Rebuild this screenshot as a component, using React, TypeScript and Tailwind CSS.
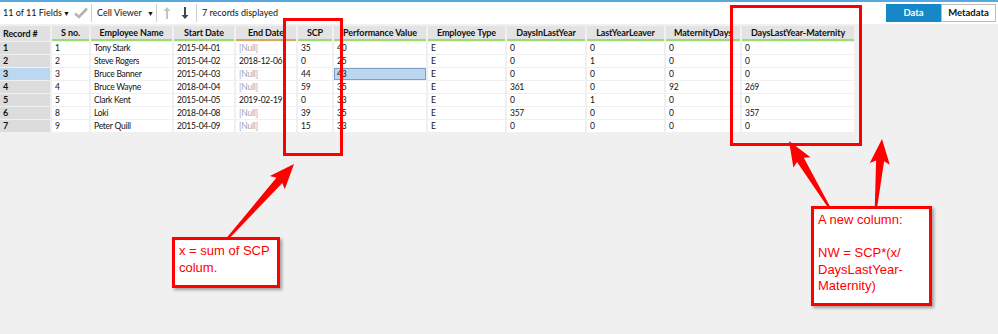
import { ReactNode } from "react";

type Col = { title: string; w: string; line: string };

const cols: Col[] = [
  { title: "S no.", w: "w-[37px]", line: "border-[#9bdc72]" },
  { title: "Employee Name", w: "w-[81px]", line: "border-[#9bdc72]" },
  { title: "Start Date", w: "w-[60px]", line: "border-[#9bdc72]" },
  { title: "End Date", w: "w-[60px]", line: "border-[#d4a867]" },
  { title: "SCP", w: "w-[34px]", line: "border-[#9bdc72]" },
  { title: "Performance Value", w: "w-[92px]", line: "border-[#9bdc72]" },
  { title: "Employee Type", w: "w-[77px]", line: "border-[#9bdc72]" },
  { title: "DaysInLastYear", w: "w-[78px]", line: "border-[#9bdc72]" },
  { title: "LastYearLeaver", w: "w-[77px]", line: "border-[#9bdc72]" },
  { title: "MaternityDays", w: "w-[74px]", line: "border-[#9bdc72]" },
  { title: "DaysLastYear-Maternity", w: "w-[112px]", line: "border-[#9bdc72]" },
];

const rows: string[][] = [
  ["1", "Tony Stark", "2015-04-01", "", "35", "40", "E", "0", "0", "0", "0"],
  ["2", "Steve Rogers", "2015-04-02", "2018-12-06", "0", "25", "E", "0", "1", "0", "0"],
  ["3", "Bruce Banner", "2015-04-03", "", "44", "43", "E", "0", "0", "0", "0"],
  ["4", "Bruce Wayne", "2018-04-04", "", "59", "35", "E", "361", "0", "92", "269"],
  ["5", "Clark Kent", "2015-04-05", "2019-02-19", "0", "33", "E", "0", "1", "0", "0"],
  ["8", "Loki", "2018-04-08", "", "39", "35", "E", "357", "0", "0", "357"],
  ["9", "Peter Quill", "2015-04-09", "", "15", "33", "E", "0", "0", "0", "0"],
];

const Sep = ({ className }: { className: string }) => (
  <div className={"w-px h-[18px] bg-[#d0d0d0] " + className} />
);

// fat callout arrow, narrow tail widening into the head
function arrow(x1: number, y1: number, x2: number, y2: number) {
  const dx = x2 - x1;
  const dy = y2 - y1;
  const len = Math.hypot(dx, dy);
  const ux = dx / len;
  const uy = dy / len;
  const nx = -uy;
  const ny = ux;
  const hl = 22;
  const hw = 10;
  const bx = x2 - ux * hl;
  const by = y2 - uy * hl;
  const p = (x: number, y: number) => `${x.toFixed(1)},${y.toFixed(1)}`;
  return [
    p(x1 + nx * 1.2, y1 + ny * 1.2),
    p(bx + nx * 4, by + ny * 4),
    p(bx - ux * 3 + nx * hw, by - uy * 3 + ny * hw),
    p(x2, y2),
    p(bx - ux * 3 - nx * hw, by - uy * 3 - ny * hw),
    p(bx - nx * 4, by - ny * 4),
    p(x1 - nx * 1.2, y1 - ny * 1.2),
  ].join(" ");
}

const Note = ({ className, children }: { className: string; children: ReactNode }) => (
  <div
    className={
      "absolute bg-white border-[3px] border-[#ff0000] shadow-[2px_2px_3px_rgba(0,0,0,0.35)] text-[#ff0000] text-[13px] leading-[16.5px] pl-[4px] pt-[3px] whitespace-nowrap " +
      className
    }
    style={{ fontFamily: '"Liberation Sans", Arial, sans-serif' }}
  >
    {children}
  </div>
);

export default function App() {
  return (
    <div
      className="relative w-[998px] h-[334px] bg-[#f0f0f0] overflow-hidden text-[#111]"
      style={{ fontFamily: 'Lato, "Open Sans", sans-serif' }}
    >
      {/* toolbar */}
      <div className="h-[24px] bg-white border-t-[2px] border-[#5aa6de] flex items-center text-[9px] pr-[2px] whitespace-nowrap">
        <span className="pl-[3px] w-[63px]">11 of 11 Fields</span>
        <span className="text-[7px] w-[11px]">▼</span>
        <svg width="14" height="12" viewBox="0 0 14 12">
          <path d="M1 6.5 L5 10 L13 1.5" fill="none" stroke="#b4b4b4" strokeWidth="2.6" />
        </svg>
        <Sep className="ml-[3px] mr-[5px]" />
        <span className="w-[50px]">Cell Viewer</span>
        <span className="text-[7px] w-[9px]">▼</span>
        <Sep className="mr-[5px]" />
        <svg width="10" height="14" viewBox="0 0 10 14">
          <path d="M5 1 L1.5 5 H4 V13 H6 V5 H8.5 Z" fill="#c4c4c4" />
        </svg>
        <svg width="10" height="14" viewBox="0 0 10 14" className="ml-[8px]">
          <path d="M5 13 L1.5 9 H4 V1 H6 V9 H8.5 Z" fill="#3c4a4a" />
        </svg>
        <Sep className="ml-[6px] mr-[5px]" />
        <span>7 records displayed</span>
        <div className="ml-auto flex h-[18px] text-[9.5px] font-bold">
          <div className="w-[55px] bg-[#1687c7] text-white flex items-center justify-center">Data</div>
          <div className="w-[55px] bg-white border border-[#bdbdbd] flex items-center justify-center">Metadata</div>
        </div>
      </div>

      {/* grid */}
      <div className="mt-[2px] flex flex-col gap-[1px] text-[8.5px] leading-[12px] w-[855px]">
        <div className="flex gap-[2px] h-[15px] text-[9px] tracking-[-0.1px]">
          <div className="w-[50px] bg-[#e1e1e1] font-bold pl-[3px] flex items-center">Record #</div>
          {cols.map((c) => (
            <div
              key={c.title}
              className={`${c.w} bg-[#e3e3e3] border-b-2 ${c.line} font-bold flex items-center justify-center whitespace-nowrap overflow-hidden`}
            >
              {c.title}
            </div>
          ))}
        </div>
        {rows.map((r, i) => (
          <div key={i} className="flex gap-[2px] h-[12px] tracking-[-0.25px]">
            <div
              className={`w-[50px] font-bold pl-[3px] text-[9px] ${i === 2 ? "bg-[#bcd7f0]" : "bg-[#dcdcdc]"}`}
            >
              {i + 1}
            </div>
            {cols.map((c, j) => {
              const v = r[j];
              const sel = i === 2 && j === 5;
              return (
                <div
                  key={c.title}
                  className={`${c.w} whitespace-nowrap overflow-hidden ${
                    sel ? "bg-[#bcd7f0] border border-[#7c9ec8] pl-[2px] leading-[10px]" : "bg-white pl-[3px]"
                  }`}
                >
                  {v === "" ? <span className="text-[#a5a5b8]">[Null]</span> : v}
                </div>
              );
            })}
          </div>
        ))}
      </div>

      {/* highlight boxes */}
      <div className="absolute left-[283px] top-[18px] w-[60px] h-[138px] border-[3px] border-[#ff0000]" />
      <div className="absolute left-[730px] top-[5px] w-[132px] h-[141px] border-[3px] border-[#ff0000]" />

      <svg className="absolute left-0 top-0" width="998" height="334">
        <polygon points={arrow(228, 238, 294, 164)} fill="#ff0000" />
        <polygon points={arrow(829, 207, 789, 141)} fill="#ff0000" />
        <polygon points={arrow(876, 207, 882, 139)} fill="#ff0000" />
      </svg>

      <Note className="left-[172px] top-[237px] w-[108px] h-[51px]">
        x = sum of SCP
        <br />
        colum.
      </Note>
      <Note className="left-[811px] top-[206px] w-[121px] h-[100px]">
        A new column:
        <br />
        <br />
        NW = SCP*(x/
        <br />
        DaysLastYear-
        <br />
        Maternity)
      </Note>
    </div>
  );
}
